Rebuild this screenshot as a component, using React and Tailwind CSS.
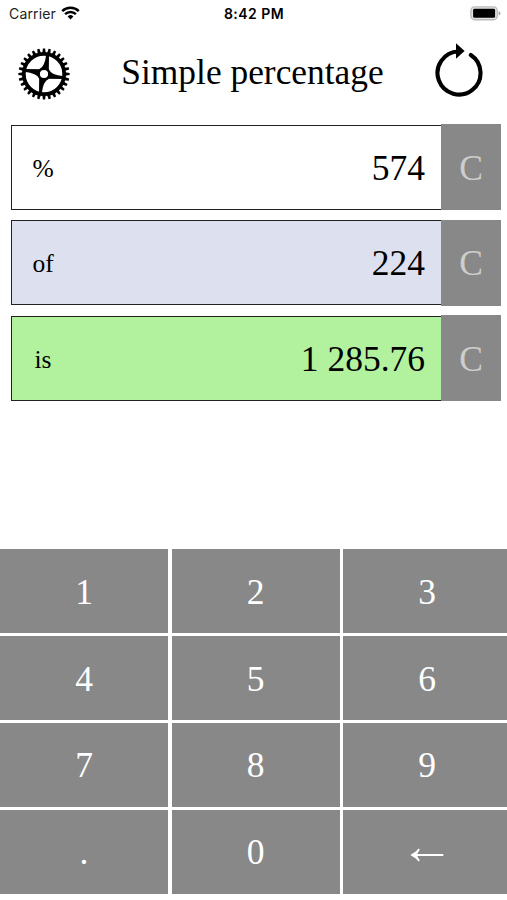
import React, { useState } from "react";

const KEYS = ["1", "2", "3", "4", "5", "6", "7", "8", "9", ".", "0", "←"];

const TEETH = Array.from({ length: 28 }, (_, i) => (i * 360) / 28);

const WifiIcon = () => (
  <svg width="19" height="14" viewBox="0 0 19 14" fill="none" stroke="#000" strokeWidth="2.5">
    <path d="M1.2 5.1a11.8 11.8 0 0 1 16.6 0" />
    <path d="M4.1 8.2a7.6 7.6 0 0 1 10.8 0" />
    <path d="M9.5 13.4L6.6 10.5a4.1 4.1 0 0 1 5.8 0z" fill="#000" stroke="none" />
  </svg>
);

const BatteryIcon = () => (
  <svg width="31" height="15" viewBox="0 0 31 15">
    <rect x="0.9" y="0.9" width="26.4" height="12.8" rx="3.8" fill="#e4e4e4" stroke="#bcbcbc" strokeWidth="1.4" />
    <rect x="3.1" y="2.8" width="22" height="9" rx="1.4" fill="#000" />
    <path d="M28.6 5c1.2.4 1.9 1.3 1.9 2.3s-.7 1.9-1.9 2.3z" fill="#a8a8a8" />
  </svg>
);

const GearIcon = () => (
  <svg width="54" height="54" viewBox="-27 -27 54 54">
    {TEETH.map((angle) => (
      <path key={angle} d="M-1.7 -20.8L-1.1 -25.6H1.1L1.7 -20.8z" transform={`rotate(${angle})`} />
    ))}
    <circle r="20.2" fill="none" stroke="#000" strokeWidth="3.8" />
    {[0, 90, 180, 270].map((angle) => (
      <path key={angle} d="M2.2 -19.5H5L4.8 -2L-5.4 -2.5L-4.6 -5Q0.8 -7 2.2 -19.5z" transform={`rotate(${angle})`} />
    ))}
    <circle r="4.7" fill="#fff" stroke="#000" strokeWidth="1.2" />
  </svg>
);

const ResetIcon = () => (
  <svg width="50" height="56" viewBox="0 0 50 56">
    <path
      d="M24.5 9.5A21.5 21.5 0 1 0 36.8 13"
      fill="none"
      stroke="#000"
      strokeWidth="4.1"
      strokeLinecap="round"
    />
    <path d="M22 1.2L30.6 9.1L22 16.8z" />
  </svg>
);

const BackIcon = () => (
  <svg className="mt-[5px]" width="34" height="14" viewBox="0 0 34 14">
    <path d="M33.3 6V8H7.2L9.8 12.6L8.6 13.4L5.8 10.4L0.6 7.3V6.7L5.8 3.6L8.6 0.6L9.8 1.4L7.2 6z" fill="#fff" />
  </svg>
);

const Field = ({ label, value, color, onClear }) => (
  <div className="flex h-[86px] items-center">
    <div className={`flex h-[85px] flex-1 items-center border border-r-0 border-[#222] pt-[3px] text-black ${color}`}>
      <span className="w-[62px] pt-px text-center text-[25.5px]">{label}</span>
      <span className="flex-1 pr-4 text-right text-[35.5px]">{value}</span>
    </div>
    <button onClick={onClear} className="h-[86px] w-[60px] bg-[#888] pt-[3px] text-[35.5px] text-[#cdcdcd]">
      C
    </button>
  </div>
);

const App = () => {
  const [percent, setPercent] = useState("574");
  const [base, setBase] = useState("224");

  const result =
    percent && base
      ? ((Number(percent) * Number(base)) / 100).toLocaleString("en-US").replace(/,/g, " ")
      : "";

  const handleReset = () => {
    setPercent("");
    setBase("");
  };

  const handleKey = (key) => {
    if (key === "←") {
      setPercent((prev) => prev.slice(0, -1));
      return;
    }
    setPercent((prev) => (key === "." && prev.includes(".") ? prev : prev + key));
  };

  return (
    <div className="flex h-[900px] w-[507px] flex-col overflow-hidden bg-white font-['Liberation_Serif',serif] text-black">
      <div className="grid h-7 grid-cols-3 items-center pr-[6px] pb-[2px] pl-[9px] font-['Inter',sans-serif] text-[14px]">
        <div className="flex items-center gap-[5px] text-[#222]">
          <span className="tracking-[0.15px]">Carrier</span>
          <WifiIcon />
        </div>
        <span className="pr-[2px] text-center text-[14px] font-semibold tracking-[0.45px]">8:42 PM</span>
        <div className="flex justify-end">
          <BatteryIcon />
        </div>
      </div>

      <div className="flex h-24 items-start justify-between pr-[23px] pl-[17px]">
        <button onClick={handleReset} className="mt-[19px]">
          <GearIcon />
        </button>
        <h1 className="mt-[18px] text-[35.4px] leading-[52px]">Simple percentage</h1>
        <button onClick={handleReset} className="mt-[14px]">
          <ResetIcon />
        </button>
      </div>

      <div className="flex flex-col gap-[9.5px] pr-[6px] pl-[11px]">
        <Field label="%" value={percent} color="bg-white" onClear={() => setPercent("")} />
        <Field label="of" value={base} color="bg-[#dce0ef]" onClear={() => setBase("")} />
        <Field label="is" value={result} color="bg-[#b2f29e]" onClear={handleReset} />
      </div>

      <div className="mt-auto mb-[6.5px] grid w-[511px] grid-cols-3 gap-x-[3.5px] gap-y-[2.7px]">
        {KEYS.map((key) => (
          <button
            key={key}
            onClick={() => handleKey(key)}
            className="flex h-[84px] items-center justify-center bg-[#888] pt-[2px] text-[35.5px] text-white"
          >
            {key === "←" ? <BackIcon /> : key}
          </button>
        ))}
      </div>
    </div>
  );
};

export default App;
